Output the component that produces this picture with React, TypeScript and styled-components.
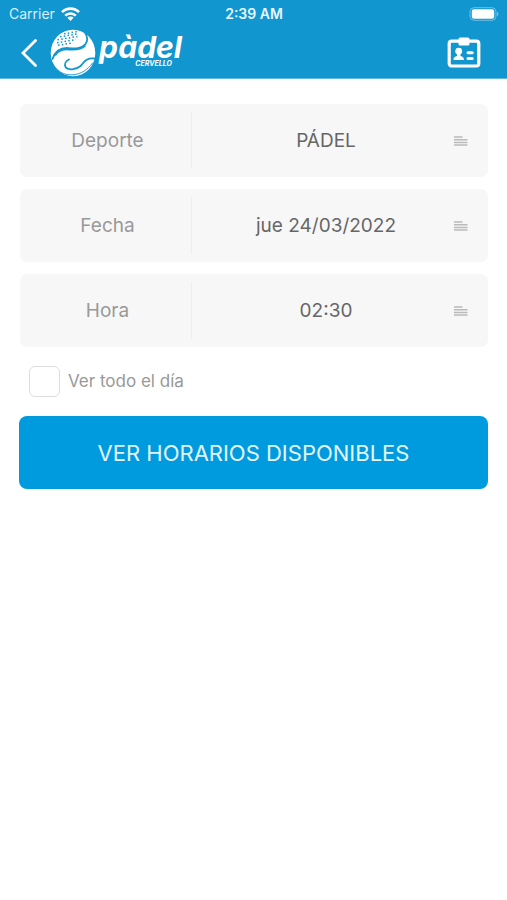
import React from "react";
import styled, { createGlobalStyle } from "styled-components";

const GlobalStyle = createGlobalStyle`
  *, *::before, *::after { box-sizing: border-box; }
  body {
    margin: 0;
    background: #fff;
    font-family: Inter, "Open Sans", sans-serif;
  }
`;

const Header = styled.header`
  background: #1296d0;
  border-bottom: 1px solid #5fb9e0;
  color: #fff;
`;

const StatusBar = styled.div`
  display: grid;
  grid-template-columns: 1fr auto 1fr;
  align-items: center;
  height: 27px;
  padding: 0 8px 0 9px;
  font-size: 14px;
  line-height: 27px;
`;

const Carrier = styled.div`
  display: flex;
  align-items: center;
  gap: 6px;
  color: #d8f0fb;
`;

const Clock = styled.time`
  font-size: 14px;
  font-weight: 600;
  color: #e6f6fd;
`;

const Battery = styled.svg`
  justify-self: end;
  display: block;
`;

const NavBar = styled.nav`
  display: flex;
  align-items: center;
  height: 51px;
  padding: 0 26px 0 20px;
`;

const IconButton = styled.button`
  display: flex;
  padding: 0;
  border: 0;
  background: none;
  color: #fff;
  cursor: pointer;
`;

const Brand = styled.a`
  display: flex;
  align-items: center;
  margin: 0 auto 0 12px;
  color: #fff;
  text-decoration: none;
  font-style: italic;
  font-weight: 700;
`;

const Wordmark = styled.span`
  display: flex;
  flex-direction: column;
  margin-left: 3px;
  padding-bottom: 6px;
`;

const BrandName = styled.span`
  font-size: 30px;
  line-height: 28px;
`;

const BrandPlace = styled.span`
  align-self: flex-end;
  margin-right: 10px;
  font-size: 7px;
  line-height: 6px;
`;

const Form = styled.form`
  display: flex;
  flex-direction: column;
  gap: 12px;
  padding: 25px 19px;
`;

const Field = styled.div`
  display: flex;
  align-items: center;
  height: 73px;
  margin: 0 0 0 1px;
  padding: 8px 20px 8px 0;
  border-radius: 7px;
  background: #f7f7f7;
`;

const FieldLabel = styled.label`
  display: flex;
  align-items: center;
  justify-content: center;
  align-self: stretch;
  width: 172px;
  padding-left: 4px;
  border-right: 1px solid #eee;
  color: #999;
  font-size: 19px;
  line-height: 24px;
`;

const Picker = styled.select`
  flex: 1;
  min-width: 0;
  height: 56px;
  padding: 0 0 0 6px;
  border: 0;
  background: none;
  appearance: none;
  color: #666;
  font: inherit;
  font-size: 19px;
  text-align: center;
  text-align-last: center;
  cursor: pointer;
`;

const CheckRow = styled.label`
  display: flex;
  align-items: center;
  align-self: flex-start;
  gap: 8px;
  margin: 7px 0 7px 10px;
  color: #999;
  font-size: 17px;
  line-height: 31px;
`;

const Checkbox = styled.input`
  appearance: none;
  width: 31px;
  height: 31px;
  margin: 0;
  border: 1px solid #ddd;
  border-radius: 6px;
  background: #fff;
  &:checked { background: #009bdf; }
`;

const Submit = styled.button`
  height: 73px;
  border: 0;
  border-radius: 8px;
  background: #009bdf;
  color: #e2f5fd;
  font: inherit;
  font-size: 22px;
  cursor: pointer;
`;

const WifiIcon = () => (
  <svg width="19" height="14" viewBox="0 0 19 14" aria-hidden="true">
    <g fill="none" stroke="#fff" strokeWidth="2.6">
      <path d="M1 5.2a12 12 0 0 1 17 0" />
      <path d="M4.2 8.6a7.6 7.6 0 0 1 10.600 0" />
    </g>
    <path d="M6.4 10.800a4.400 4.400 0 0 1 6.200 0L9.500 14z" fill="#fff" />
  </svg>
);

const BatteryIcon = () => (
  <Battery width="30" height="14" viewBox="0 0 30 14" aria-hidden="true">
    <rect x="1" y="0.7" width="26" height="12.6" rx="4" fill="none" stroke="#6fc0e4" strokeWidth="1" />
    <rect x="2.8" y="2.3" width="22.4" height="9.4" rx="2.2" fill="#fff" />
    <path d="M28 4.800c2 .8 2 3.600 0 4.400z" fill="#6fc0e4" />
  </Battery>
);

const BackIcon = () => (
  <svg width="18" height="28" viewBox="0 0 18 28" fill="none" aria-hidden="true">
    <path d="M15.5 1.5 3 14l12.500 12.500" stroke="#fff" strokeWidth="2.8" strokeLinecap="round" />
  </svg>
);

const BallIcon = () => (
  <svg width="46" height="48" viewBox="0 0 46 48" aria-hidden="true">
    <ellipse cx="23" cy="24" rx="22.300" ry="23.300" fill="#fff" />
    <g fill="none" stroke="#1296d0" strokeLinecap="round">
      <path d="M2.500 30C5 22.500 9.500 19 17 19C24 19.500 31 20.500 35.500 15C38 11.500 37.500 7.500 35 3.500" strokeWidth="1.800" />
      <path d="M5.500 26C9 21 14 20.300 19 20.600C25 21 31 21 35 17" strokeWidth="1.600" />
      <path d="M44.500 29.500C35.500 28.500 34 33.500 30.500 37C26 41 18 41.500 15.500 38C14 35 16 32 19 30.500" strokeWidth="1.800" />
      <path d="M1.800 33C6 42.500 14 46.300 22 45.800C31 45.500 38 40.500 42.500 34" strokeWidth="0.900" />
    </g>
    <g fill="none" stroke="#1296d0" strokeWidth="1.500" strokeDasharray="1.600 2.200">
      <path d="M14 4.800 27 2.600" />
      <path d="M10 7.800 28 4.800" />
      <path d="M7.500 10.800 27.500 7.500" />
      <path d="M7 13.800 26 10.500" />
      <path d="M8 16.300 22 14" />
    </g>
  </svg>
);

const BadgeIcon = () => (
  <svg width="34" height="31" viewBox="0 0 34 31" aria-hidden="true">
    <rect x="2.200" y="4.200" width="29.600" height="24.800" rx="2.500" fill="none" stroke="#fff" strokeWidth="3.200" />
    <rect x="11.500" y="0.500" width="11" height="8" rx="1.500" fill="#fff" />
    <circle cx="11.700" cy="14.200" r="3.400" fill="#fff" />
    <path d="M10 16.500h3.400v2.500c2.500.3 3.500 1.500 3.500 4H6.500c0-2.500 1.300-3.700 3.500-4z" fill="#fff" />
    <path d="M21 15.700h4.200M21 21.400h4.200" stroke="#fff" strokeWidth="3" strokeLinecap="round" />
  </svg>
);

const LinesIcon = () => (
  <svg width="14" height="10" viewBox="0 0 14 10" aria-hidden="true">
    <path d="M0 1h8.500M0 3.800h13.500M0 6.400h13.500M0 9h13.500" stroke="#bababa" strokeWidth="1.500" />
  </svg>
);

const fields = [
  { id: "deporte", label: "Deporte", value: "PÁDEL" },
  { id: "fecha", label: "Fecha", value: "jue 24/03/2022" },
  { id: "hora", label: "Hora", value: "02:30" },
];

export default function App() {
  return (
    <>
      <GlobalStyle />
      <Header>
        <StatusBar>
          <Carrier>
            Carrier
            <WifiIcon />
          </Carrier>
          <Clock>2:39 AM</Clock>
          <BatteryIcon />
        </StatusBar>
        <NavBar>
          <IconButton type="button" aria-label="Volver">
            <BackIcon />
          </IconButton>
          <Brand href="#">
            <BallIcon />
            <Wordmark>
              <BrandName>pàdel</BrandName>
              <BrandPlace>CERVELLO</BrandPlace>
            </Wordmark>
          </Brand>
          <IconButton type="button" aria-label="Mi carnet">
            <BadgeIcon />
          </IconButton>
        </NavBar>
      </Header>
      <main>
        <Form onSubmit={(event) => event.preventDefault()}>
          {fields.map(({ id, label, value }) => (
            <Field key={id}>
              <FieldLabel htmlFor={id}>{label}</FieldLabel>
              <Picker id={id} defaultValue={value}>
                <option>{value}</option>
              </Picker>
              <LinesIcon />
            </Field>
          ))}
          <CheckRow>
            <Checkbox type="checkbox" />
            Ver todo el día
          </CheckRow>
          <Submit type="submit">VER HORARIOS DISPONIBLES</Submit>
        </Form>
      </main>
    </>
  );
}
